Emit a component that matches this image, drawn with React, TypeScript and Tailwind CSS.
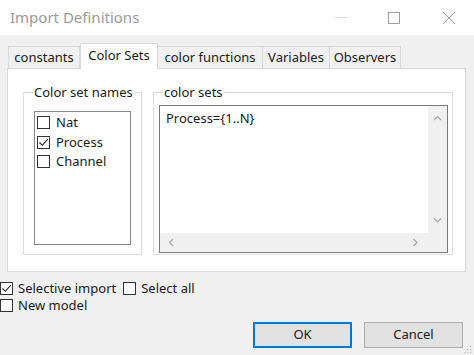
import type { ReactNode } from 'react';

const font = { fontFamily: '"Noto Sans", "Open Sans", Arial, sans-serif' };

const CheckBox = ({ checked = false }: { checked?: boolean }) => (
  <span className="flex h-[13px] w-[13px] shrink-0 items-center justify-center border border-[#333333] bg-white">
    {checked && (
      <svg width="11" height="11" viewBox="0 0 11 11" fill="none">
        <path d="M1.5 5.5 L4.3 8.3 L9.8 2.2" stroke="#222" strokeWidth="1.1" />
      </svg>
    )}
  </span>
);

const Chevron = ({ dir }: { dir: 'up' | 'down' | 'left' | 'right' }) => {
  const d = {
    up: 'M1 5 L4.5 1.5 L8 5',
    down: 'M1 1.5 L4.5 5 L8 1.5',
    left: 'M5 1 L1.5 4.5 L5 8',
    right: 'M1.5 1 L5 4.5 L1.5 8',
  }[dir];
  const w = dir === 'up' || dir === 'down' ? 9 : 7;
  const h = dir === 'up' || dir === 'down' ? 7 : 9;
  return (
    <svg width={w} height={h} viewBox={`0 0 ${w} ${h}`} fill="none">
      <path d={d} stroke="#a6a6a6" strokeWidth="1.2" />
    </svg>
  );
};

const Group = ({ label, className, children }: { label: string; className: string; children: ReactNode }) => (
  <div className={`relative border border-[#dcdcdc] ${className}`}>
    <span className="absolute left-[9px] top-[-10px] bg-white px-[1px] text-[13px] leading-[18px] text-[#1a1a1a]">
      {label}
    </span>
    {children}
  </div>
);

const tabs = [
  { name: 'constants', w: 'w-[72px]' },
  { name: 'Color Sets', w: 'w-[78px]', active: true },
  { name: 'color functions', w: 'w-[105px]' },
  { name: 'Variables', w: 'w-[67px]' },
  { name: 'Observers', w: 'w-[71px]' },
];

export default function App() {
  return (
    <div className="flex h-[355px] w-[474px] flex-col overflow-hidden bg-[#f0f0f0] text-[#1a1a1a]" style={font}>
      {/* Title bar */}
      <div className="flex h-[35px] shrink-0 items-center bg-white">
        <span className="ml-[10px] text-[15px] text-[#9a9a9a]">Import Definitions</span>
        <div className="ml-auto flex h-full items-center">
          <span className="mr-[41px] h-[1px] w-[12px] bg-[#d8d8d8]" />
          <span className="mr-[42px] h-[12px] w-[12px] border border-[#a0a0a0]" />
          <svg width="14" height="14" viewBox="0 0 14 14" className="mr-[18px]">
            <path d="M1 1 L13 13 M13 1 L1 13" stroke="#a0a0a0" strokeWidth="1" />
          </svg>
        </div>
      </div>

      {/* Tabs */}
      <div className="ml-[8px] mt-[8px] flex h-[25px] items-end">
        {tabs.map((t) =>
          t.active ? (
            <div
              key={t.name}
              className={`relative z-10 flex h-[26px] items-start justify-center border border-b-0 border-[#d9d9d9] bg-white pt-[2px] text-[13px] ${t.w} -mb-[1px]`}
            >
              {t.name}
            </div>
          ) : (
            <div
              key={t.name}
              className={`flex h-[22px] items-center justify-center border border-b-0 border-l-0 border-[#d9d9d9] bg-[#f0f0f0] text-[13px] first:border-l ${t.w}`}
            >
              {t.name}
            </div>
          )
        )}
      </div>

      {/* Tab panel */}
      <div className="ml-[7px] flex h-[204px] w-[459px] border border-[#d9d9d9] bg-white pl-[15px] pt-[23px]">
        <Group label="Color set names" className="h-[163px] w-[119px]">
          <div className="ml-[10px] mt-[18px] flex h-[134px] w-[97px] flex-col border border-[#828790] pt-[1px]">
            {[
              ['Nat', false],
              ['Process', true],
              ['Channel', false],
            ].map(([n, c]) => (
              <div key={n as string} className="flex h-[19.5px] items-center pl-[2px] text-[13px]">
                <CheckBox checked={c as boolean} />
                <span className="ml-[6px]">{n as string}</span>
              </div>
            ))}
          </div>
        </Group>

        <Group label="color sets" className="ml-[11px] h-[163px] w-[300px]">
          <div className="ml-[5px] mt-[12px] flex h-[148px] w-[289px] flex-col border border-[#7a7a7a]">
            <div className="flex min-h-0 flex-1">
              <div className="flex-1 pl-[6px] pt-[3px] text-[13px]">Process={'{'}1..N{'}'}</div>
              <div className="flex w-[19px] flex-col items-center justify-between bg-[#f0f0f0] py-[9px]">
                <Chevron dir="up" />
                <Chevron dir="down" />
              </div>
            </div>
            <div className="flex h-[19px] items-center justify-between bg-[#f0f0f0] pl-[8px] pr-[28px]">
              <Chevron dir="left" />
              <Chevron dir="right" />
            </div>
          </div>
        </Group>
      </div>

      {/* Options */}
      <div className="mt-[10px] flex flex-col gap-[4px] text-[13px]">
        <div className="flex h-[13px] items-center">
          <CheckBox checked />
          <span className="ml-[5px]">Selective import</span>
          <span className="ml-[7px] flex items-center">
            <CheckBox />
            <span className="ml-[5px]">Select all</span>
          </span>
        </div>
        <div className="flex h-[13px] items-center">
          <CheckBox />
          <span className="ml-[5px]">New model</span>
        </div>
      </div>

      {/* Buttons */}
      <div className="relative mt-[10px] flex justify-end gap-[12px] pr-[11px]">
        <button className="h-[26px] w-[99px] border-2 border-[#0078d7] bg-[#e1e1e1] text-[13px]">OK</button>
        <button className="h-[26px] w-[99px] border border-[#adadad] bg-[#e1e1e1] text-[13px]">Cancel</button>
        <svg width="9" height="9" viewBox="0 0 9 9" className="absolute bottom-[-6px] right-[2px]">
          <g fill="#b8b8b8">
            <rect x="7" y="1" width="1.2" height="1.2" />
            <rect x="4" y="4" width="1.2" height="1.2" />
            <rect x="7" y="4" width="1.2" height="1.2" />
            <rect x="1" y="7" width="1.2" height="1.2" />
            <rect x="4" y="7" width="1.2" height="1.2" />
            <rect x="7" y="7" width="1.2" height="1.2" />
          </g>
        </svg>
      </div>
    </div>
  );
}
